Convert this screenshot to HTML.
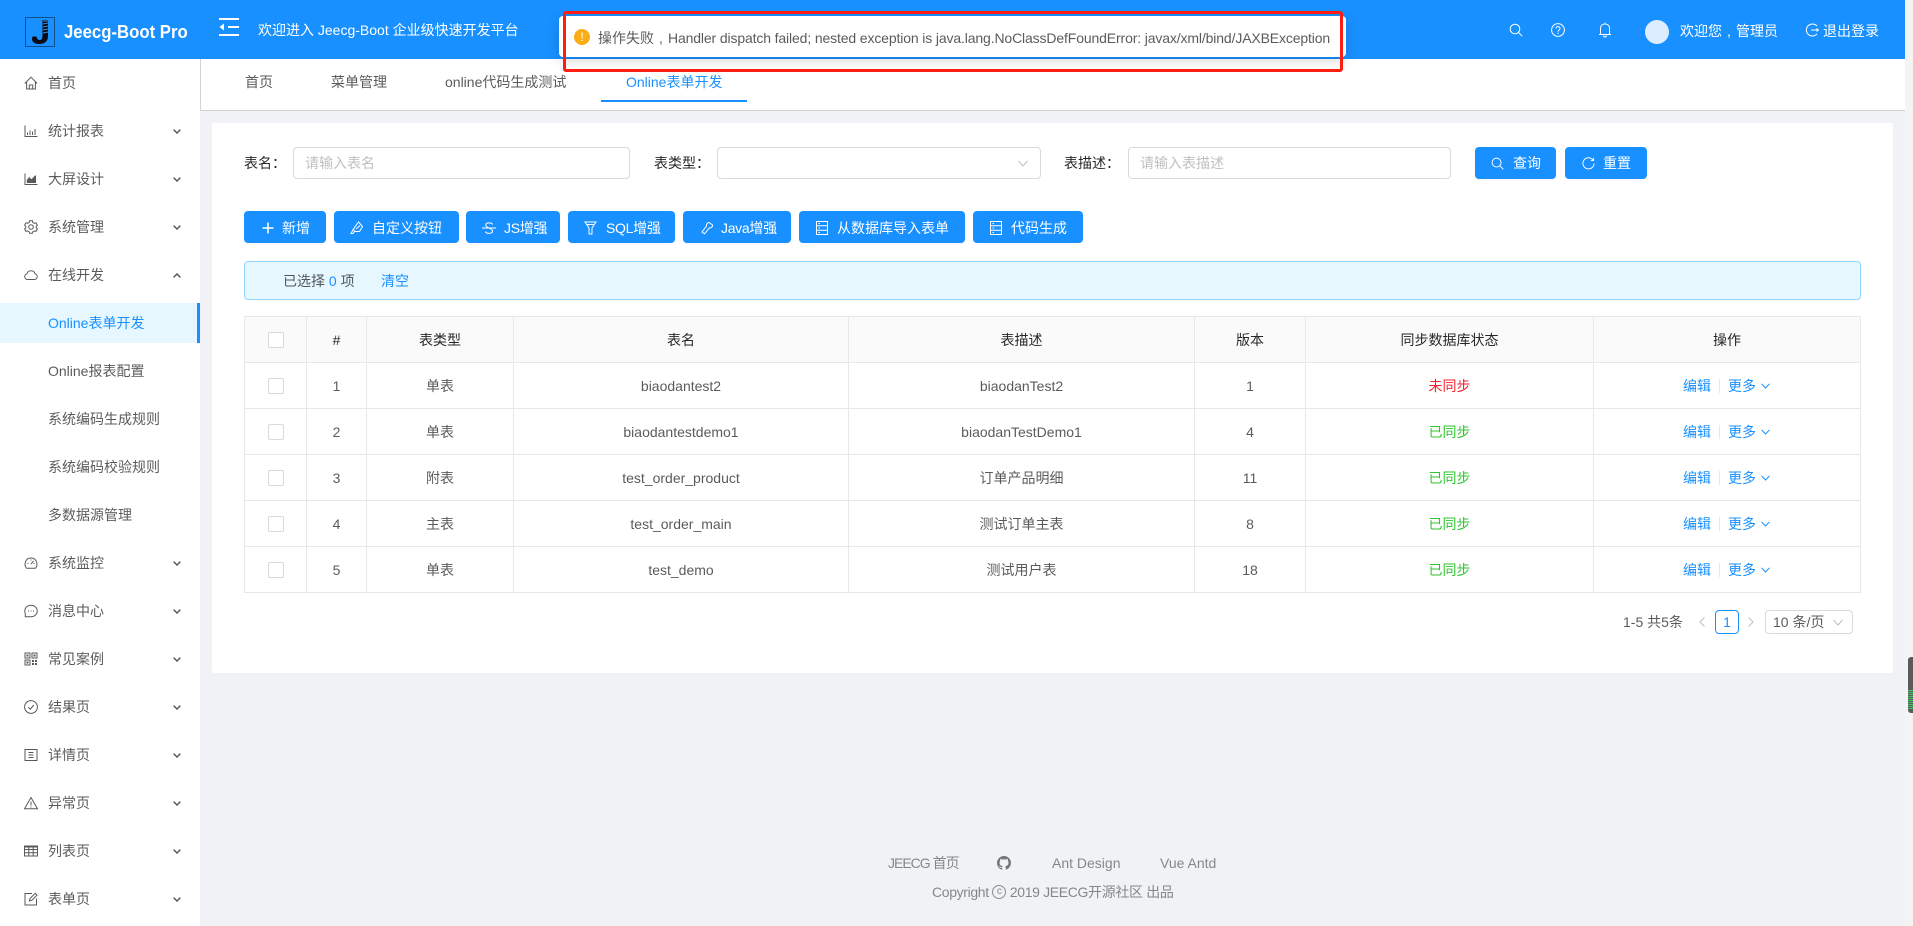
<!DOCTYPE html>
<html lang="zh-CN"><head><meta charset="utf-8"><title>Jeecg-Boot Pro</title>
<style>
*{box-sizing:border-box}
html,body{margin:0;padding:0;width:1913px;height:926px;overflow:hidden;background:#f0f2f5}
body{position:relative;font-family:"Liberation Sans","Noto Sans CJK SC",sans-serif;font-size:14px;color:rgba(0,0,0,.65)}
.a,.t,svg.i{position:absolute}
.t{white-space:nowrap;line-height:22px;height:22px}
.w{color:#fff}.k{color:rgba(0,0,0,.85)}.b{color:#1890ff}
svg.i{fill:none;stroke:#595959;stroke-width:1}
svg.h{stroke:#fff}
.btn{position:absolute;top:211px;height:32px;background:#1890ff;border-radius:4px;box-shadow:0 2px 0 rgba(0,0,0,.015)}
.inp{position:absolute;top:147px;height:32px;background:#fff;border:1px solid #d9d9d9;border-radius:4px}
.cm{display:inline-block;width:14px;text-align:center;letter-spacing:0}
#tbl{position:absolute;left:244px;top:316px;width:1617px;border-collapse:separate;border-spacing:0;table-layout:fixed;border-top:1px solid #e8e8e8;border-left:1px solid #e8e8e8}
#tbl td,#tbl th{height:46px;padding:0;text-align:center;font-weight:400;border-right:1px solid #e8e8e8;border-bottom:1px solid #e8e8e8}
#tbl tr:first-child th{height:46px;background:#fafafa;color:rgba(0,0,0,.85)}
.cb{display:block;width:16px;height:16px;margin:0 auto;border:1px solid #d9d9d9;border-radius:2px;background:#fff}
.ok{color:#2fc52f}.no{color:#f5222d}
.op{position:relative;display:block;height:22px;line-height:22px;color:#1890ff;text-align:left;padding-left:89px}
.op i{position:absolute;left:125px;top:4px;width:1px;height:14px;background:#e8e8e8}
.op b{position:absolute;left:134px;top:0;font-weight:400}
.op svg{position:absolute;left:167px;top:8px;fill:none;stroke:#1890ff;stroke-width:1}
</style></head><body>

<!-- header -->
<div class="a" style="left:0;top:0;width:1905px;height:59px;background:#1890ff"></div>
<div class="a" style="left:1905px;top:0;width:8px;height:926px;background:#f4f4f5"></div>
<svg class="a" style="left:25px;top:17px" width="30" height="30" viewBox="0 0 30 30"><rect x=".5" y=".5" width="29" height="29" fill="none" stroke="#0f4f8a"/><path d="M17.500 3H23V19C23 25 19 27 14 27C10 27 7 25 7 22L7.500 19.500H11.500C12 22 13 23 15 23C17 23 17.500 21 17.500 18Z" fill="#0a0a14"/><path d="M18 4L23 4M18 7L23 6M18 10L23 9M18 13L23 12M18 16L23 15" stroke="#3f8fd8" stroke-width="1"/></svg>
<div class="t w" style="left:64px;top:21px;font-size:18px;font-weight:700;transform:scaleX(.93);transform-origin:left center">Jeecg-Boot Pro</div>
<svg class="a" style="left:219px;top:18px" width="20" height="18" viewBox="0 0 20 18"><path d="M0 1H20M9 9H20M0 17H20" stroke="#fff" stroke-width="2"/><path d="M5 5.500V12.500L0.500 9Z" fill="#fff"/></svg>
<div class="t w" style="left:258px;top:19px">欢迎进入 Jeecg-Boot 企业级快速开发平台</div>

<svg class="i h" style="left:1509px;top:23px" width="14" height="14" viewBox="0 0 14 14"><circle cx="6" cy="6" r="4.800"/><path d="M9.500 9.500L13.200 13.200"/></svg>
<svg class="i h" style="left:1551px;top:23px" width="14" height="14" viewBox="0 0 14 14"><circle cx="7" cy="7" r="6.400"/><path d="M5 5.500C5 3 9 3 9 5.500C9 7 7 7 7 8.700"/><path d="M7 9.800V11"/></svg>
<svg class="i h" style="left:1598px;top:22px" width="14" height="16" viewBox="0 0 14 16"><path d="M1 12.500H13M2.500 12.500V6.500C2.500 3.500 4.500 2 7 2C9.500 2 11.500 3.500 11.500 6.500V12.500M7 .5V2M5.500 13.500C5.800 15.500 8.200 15.500 8.500 13.500"/></svg>
<div class="a" style="left:1645px;top:20px;width:24px;height:24px;border-radius:50%;background:#dcedff"></div>
<div class="t w" style="left:1680px;top:20px">欢迎您<span class="cm">,</span>管理员</div>
<svg class="i h" style="left:1805px;top:23px" width="14" height="14" viewBox="0 0 14 14"><path d="M12 3.200A6 6 0 1 0 12 10.800"/><path d="M6 7H13.500M11.500 5.500L13.500 7L11.500 8.500"/></svg>
<div class="t w" style="left:1823px;top:20px">退出登录</div>

<!-- sidebar -->
<div class="a" style="left:0;top:59px;width:200px;height:867px;background:#fff"></div>
<div class="a" style="left:0;top:303px;width:200px;height:40px;background:#e6f7ff;border-right:3px solid #1890ff"></div>

<svg class="i" style="left:24px;top:76px" width="14" height="14" viewBox="0 0 14 14"><path d="M.8 7.500L7 1.200L13.200 7.500M2.600 5.800V13H11.400V5.800M5.300 13V9H8.700V13"/></svg>
<div class="t" style="left:48px;top:72px">首页</div>

<svg class="i" style="left:24px;top:124px" width="14" height="14" viewBox="0 0 14 14"><path d="M1 1.500V12.500H13.500M3.500 11V8.500M6 11V6.500M8.500 11V7.500M11 11V5" /></svg>
<div class="t" style="left:48px;top:120px">统计报表</div>

<svg class="i" style="left:24px;top:172px" width="14" height="14" viewBox="0 0 14 14"><path d="M1 1.500V12.500H13.500"/><path d="M2.800 11V8L5.200 5L7.500 7.200L11 3.500L12 3.500V11Z" fill="#595959" stroke="none"/></svg>
<div class="t" style="left:48px;top:168px">大屏设计</div>

<svg class="i" style="left:24px;top:220px" width="14" height="14" viewBox="0 0 14 14"><circle cx="7" cy="7" r="2.300"/><path d="M5.600 .8H8.400L8.900 2.500L10.400 3.300L12 2.800L13.400 5.200L12.200 6.400V7.800L13.400 9L12 11.400L10.400 10.900L8.900 11.700L8.400 13.300H5.600L5.100 11.700L3.600 10.900L2 11.400L.6 9L1.800 7.800V6.400L.6 5.200L2 2.800L3.600 3.300L5.100 2.500Z"/></svg>
<div class="t" style="left:48px;top:216px">系统管理</div>

<svg class="i" style="left:24px;top:268px" width="14" height="14" viewBox="0 0 14 14"><path d="M3.800 11.500H10.400A2.900 2.900 0 0 0 11.100 5.800A4.300 4.300 0 0 0 2.900 5.800A2.900 2.900 0 0 0 3.800 11.500Z"/></svg>
<div class="t" style="left:48px;top:264px">在线开发</div>

<div class="t b" style="left:48px;top:312px">Online表单开发</div>
<div class="t" style="left:48px;top:360px">Online报表配置</div>
<div class="t" style="left:48px;top:408px">系统编码生成规则</div>
<div class="t" style="left:48px;top:456px">系统编码校验规则</div>
<div class="t" style="left:48px;top:504px">多数据源管理</div>

<svg class="i" style="left:24px;top:556px" width="14" height="14" viewBox="0 0 14 14"><path d="M2.500 12.300H11.500C14 9.500 13.500 2 7 2C.5 2 0 9.500 2.500 12.300Z"/><path d="M7 8L9.500 5M3.500 7.500H4.500M9.500 7.500H10.500M7 3.500V4.500"/></svg>
<div class="t" style="left:48px;top:552px">系统监控</div>

<svg class="i" style="left:24px;top:604px" width="14" height="14" viewBox="0 0 14 14"><path d="M7 1.200C3.500 1.200 .8 3.700 .8 7C.8 8.500 1.300 9.600 1.300 10V12.700H7C10.500 12.700 13.200 10.300 13.200 7C13.200 3.700 10.500 1.200 7 1.200Z"/><path d="M4 7H5M6.500 7H7.500M9 7H10"/></svg>
<div class="t" style="left:48px;top:600px">消息中心</div>

<svg class="i" style="left:24px;top:652px" width="14" height="14" viewBox="0 0 14 14"><path d="M1 1H6V6H1ZM8 1H13V6H8ZM1 8H6V13H1Z" /><path d="M2.500 2.500H4.500V4.500H2.500ZM9.500 2.500H11.500V4.500H9.500ZM2.500 9.500H4.500V11.500H2.500ZM8 8H10V10H8ZM11 11H13V13H11ZM8 11H10V13H8ZM11 8H13V10H11Z" fill="#595959" stroke="none"/></svg>
<div class="t" style="left:48px;top:648px">常见案例</div>

<svg class="i" style="left:24px;top:700px" width="14" height="14" viewBox="0 0 14 14"><circle cx="7" cy="7" r="6.400"/><path d="M4.300 7.200L6.300 9.200L9.800 5"/></svg>
<div class="t" style="left:48px;top:696px">结果页</div>

<svg class="i" style="left:24px;top:748px" width="14" height="14" viewBox="0 0 14 14"><path d="M1 1.500H13V12.500H1Z"/><path d="M4.500 4.500H9.500M4.500 7H9.500M4.500 9.500H9.500"/></svg>
<div class="t" style="left:48px;top:744px">详情页</div>

<svg class="i" style="left:24px;top:796px" width="14" height="14" viewBox="0 0 14 14"><path d="M7 1.500L13.500 12.800H.5Z"/><path d="M7 5.500V9.500M7 10.500V11.500"/></svg>
<div class="t" style="left:48px;top:792px">异常页</div>

<svg class="i" style="left:24px;top:844px" width="14" height="14" viewBox="0 0 14 14"><path d="M.5 2H13.500V12H.5Z" stroke-width="1"/><path d="M.5 2.500H13.500" stroke-width="2"/><path d="M.5 5.500H13.500M.5 8.700H13.500M4.800 2V12M9.200 2V12"/></svg>
<div class="t" style="left:48px;top:840px">列表页</div>

<svg class="i" style="left:24px;top:892px" width="14" height="14" viewBox="0 0 14 14"><path d="M8 1.500H1V13H12.500V6.500"/><path d="M5.500 9L6 6.500L11.200 1.300L13 3.100L7.800 8.300Z"/></svg>
<div class="t" style="left:48px;top:888px">表单页</div>

<!-- sidebar chevrons -->
<svg class="i" style="left:173px;top:129px" width="8" height="5" viewBox="0 0 8 5"><path d="M.6 .6L4 4L7.400 .6" stroke-width="1.500"/></svg>
<svg class="i" style="left:173px;top:177px" width="8" height="5" viewBox="0 0 8 5"><path d="M.6 .6L4 4L7.400 .6" stroke-width="1.500"/></svg>
<svg class="i" style="left:173px;top:225px" width="8" height="5" viewBox="0 0 8 5"><path d="M.6 .6L4 4L7.400 .6" stroke-width="1.500"/></svg>
<svg class="i" style="left:173px;top:273px" width="8" height="5" viewBox="0 0 8 5"><path d="M.6 4.400L4 1L7.400 4.400" stroke-width="1.500"/></svg>
<svg class="i" style="left:173px;top:561px" width="8" height="5" viewBox="0 0 8 5"><path d="M.6 .6L4 4L7.400 .6" stroke-width="1.500"/></svg>
<svg class="i" style="left:173px;top:609px" width="8" height="5" viewBox="0 0 8 5"><path d="M.6 .6L4 4L7.400 .6" stroke-width="1.500"/></svg>
<svg class="i" style="left:173px;top:657px" width="8" height="5" viewBox="0 0 8 5"><path d="M.6 .6L4 4L7.400 .6" stroke-width="1.500"/></svg>
<svg class="i" style="left:173px;top:705px" width="8" height="5" viewBox="0 0 8 5"><path d="M.6 .6L4 4L7.400 .6" stroke-width="1.500"/></svg>
<svg class="i" style="left:173px;top:753px" width="8" height="5" viewBox="0 0 8 5"><path d="M.6 .6L4 4L7.400 .6" stroke-width="1.500"/></svg>
<svg class="i" style="left:173px;top:801px" width="8" height="5" viewBox="0 0 8 5"><path d="M.6 .6L4 4L7.400 .6" stroke-width="1.500"/></svg>
<svg class="i" style="left:173px;top:849px" width="8" height="5" viewBox="0 0 8 5"><path d="M.6 .6L4 4L7.400 .6" stroke-width="1.500"/></svg>
<svg class="i" style="left:173px;top:897px" width="8" height="5" viewBox="0 0 8 5"><path d="M.6 .6L4 4L7.400 .6" stroke-width="1.500"/></svg>

<!-- tabs -->
<div class="a" style="left:200px;top:59px;width:1705px;height:52px;background:#fff;border-left:1px solid #d4d4d4;border-bottom:1px solid #d0d0d0"></div>
<div class="t" style="left:245px;top:71px">首页</div>
<div class="t" style="left:331px;top:71px">菜单管理</div>
<div class="t" style="left:445px;top:71px">online代码生成测试</div>
<div class="t b" style="left:626px;top:71px">Online表单开发</div>
<div class="a" style="left:601px;top:100px;width:146px;height:2px;background:#1890ff"></div>

<!-- card -->
<div class="a" style="left:212px;top:123px;width:1681px;height:550px;background:#fff;border-radius:2px"></div>

<!-- form -->
<div class="t k" style="left:244px;top:152px">表名：</div>
<div class="inp" style="left:293px;width:337px"></div>
<div class="t" style="left:305px;top:152px;color:#bfbfbf">请输入表名</div>
<div class="t k" style="left:654px;top:152px">表类型：</div>
<div class="inp" style="left:717px;width:324px"></div>
<svg class="i" style="left:1018px;top:160px" width="10" height="7" viewBox="0 0 10 7"><path d="M.5 1L5 6L9.500 1" stroke="#bfbfbf"/></svg>
<div class="t k" style="left:1064px;top:152px">表描述：</div>
<div class="inp" style="left:1128px;width:323px"></div>
<div class="t" style="left:1140px;top:152px;color:#bfbfbf">请输入表描述</div>

<div class="btn" style="left:1475px;top:147px;width:81px"></div>
<svg class="i h" style="left:1491px;top:157px" width="13" height="13" viewBox="0 0 14 14"><circle cx="6" cy="6" r="4.800"/><path d="M9.500 9.500L13.200 13.200"/></svg>
<div class="t w" style="left:1513px;top:152px">查询</div>
<div class="btn" style="left:1565px;top:147px;width:82px"></div>
<svg class="i h" style="left:1582px;top:157px" width="13" height="13" viewBox="0 0 14 14"><path d="M12 3.500A6 6 0 1 0 13 7"/><path d="M9.500 3.800H12.500V.8"/></svg>
<div class="t w" style="left:1603px;top:152px">重置</div>

<!-- toolbar -->
<div class="btn" style="left:244px;width:82px"></div>
<svg class="i" style="left:262px;top:222px" width="12" height="12" viewBox="0 0 12 12"><path d="M6 .5V11.500M.5 6H11.500" stroke="#fff" stroke-width="1.500"/></svg>
<div class="t w" style="left:282px;top:217px">新增</div>
<div class="btn" style="left:334px;width:125px"></div>
<svg class="i h" style="left:350px;top:221px" width="14" height="14" viewBox="0 0 14 14"><path d="M8.500 1L12.500 5.500L9.500 10.500H4.500L3.500 8Z"/><path d="M4.500 10.500L3 12.500H1L3.500 8M6 8L10 4.500"/></svg>
<div class="t w" style="left:372px;top:217px">自定义按钮</div>
<div class="btn" style="left:466px;width:94px"></div>
<svg class="i h" style="left:482px;top:221px" width="14" height="14" viewBox="0 0 14 14"><path d="M0 7H14M10.500 3.500C10 1.500 4 1 3.800 4C3.700 5.500 5 6.300 7 7C9 7.700 10.500 8.500 10.500 10.300C10.500 13 4 13 3.500 10.500" /></svg>
<div class="t w" style="left:504px;top:217px;letter-spacing:-.3px">JS增强</div>
<div class="btn" style="left:568px;width:107px"></div>
<svg class="i h" style="left:584px;top:221px" width="13" height="14" viewBox="0 0 13 14"><path d="M1 1H12L8 7V13H5V7ZM2.500 3.500H10.500"/></svg>
<div class="t w" style="left:606px;top:217px;letter-spacing:-.3px">SQL增强</div>
<div class="btn" style="left:683px;width:108px"></div>
<svg class="i h" style="left:700px;top:221px" width="14" height="14" viewBox="0 0 14 14"><path d="M9 1.500L12.500 4C12.800 6 10.800 7.200 9.500 6.800L4.500 12.800L2 11L6.500 5C6 3.300 7.500 1.500 9 1.500Z"/></svg>
<div class="t w" style="left:721px;top:217px;letter-spacing:-.3px">Java增强</div>
<div class="btn" style="left:799px;width:166px"></div>
<svg class="i h" style="left:816px;top:221px" width="12" height="14" viewBox="0 0 12 14"><path d="M.5 .5H11.500V13.500H.5ZM.5 4.800H11.500M.5 9.200H11.500"/><path d="M2.500 2.500H4M2.500 7H4M2.500 11.500H4"/></svg>
<div class="t w" style="left:837px;top:217px">从数据库导入表单</div>
<div class="btn" style="left:973px;width:110px"></div>
<svg class="i h" style="left:990px;top:221px" width="12" height="14" viewBox="0 0 12 14"><path d="M.5 .5H11.500V13.500H.5ZM.5 4.800H11.500M.5 9.200H11.500"/><path d="M2.500 2.500H4M2.500 7H4M2.500 11.500H4"/></svg>
<div class="t w" style="left:1011px;top:217px">代码生成</div>

<!-- alert -->
<div class="a" style="left:244px;top:261px;width:1617px;height:39px;background:#e6f7ff;border:1px solid #91d5ff;border-radius:4px"></div>
<div class="t" style="left:283px;top:270px">已选择 <span class="b">0</span> 项</div>
<div class="t b" style="left:381px;top:270px">清空</div>

<!-- table -->
<table id="tbl">
<colgroup><col style="width:62px"><col style="width:60px"><col style="width:147px"><col style="width:335px"><col style="width:346px"><col style="width:111px"><col style="width:288px"><col style="width:267px"></colgroup>
<tr><th><span class="cb"></span></th><th>#</th><th>表类型</th><th>表名</th><th>表描述</th><th>版本</th><th>同步数据库状态</th><th>操作</th></tr>
<tr><td><span class="cb"></span></td><td>1</td><td>单表</td><td>biaodantest2</td><td>biaodanTest2</td><td>1</td><td class="no">未同步</td><td><span class="op">编辑<i></i><b>更多</b><svg width="9" height="6" viewBox="0 0 9 6"><path d="M.5 .8L4.500 5L8.500 .8"/></svg></span></td></tr>
<tr><td><span class="cb"></span></td><td>2</td><td>单表</td><td>biaodantestdemo1</td><td>biaodanTestDemo1</td><td>4</td><td class="ok">已同步</td><td><span class="op">编辑<i></i><b>更多</b><svg width="9" height="6" viewBox="0 0 9 6"><path d="M.5 .8L4.500 5L8.500 .8"/></svg></span></td></tr>
<tr><td><span class="cb"></span></td><td>3</td><td>附表</td><td>test_order_product</td><td>订单产品明细</td><td>11</td><td class="ok">已同步</td><td><span class="op">编辑<i></i><b>更多</b><svg width="9" height="6" viewBox="0 0 9 6"><path d="M.5 .8L4.500 5L8.500 .8"/></svg></span></td></tr>
<tr><td><span class="cb"></span></td><td>4</td><td>主表</td><td>test_order_main</td><td>测试订单主表</td><td>8</td><td class="ok">已同步</td><td><span class="op">编辑<i></i><b>更多</b><svg width="9" height="6" viewBox="0 0 9 6"><path d="M.5 .8L4.500 5L8.500 .8"/></svg></span></td></tr>
<tr><td><span class="cb"></span></td><td>5</td><td>单表</td><td>test_demo</td><td>测试用户表</td><td>18</td><td class="ok">已同步</td><td><span class="op">编辑<i></i><b>更多</b><svg width="9" height="6" viewBox="0 0 9 6"><path d="M.5 .8L4.500 5L8.500 .8"/></svg></span></td></tr>
</table>

<!-- pagination -->
<div class="t" style="left:1623px;top:611px">1-5 共5条</div>
<svg class="i" style="left:1699px;top:617px" width="6" height="10" viewBox="0 0 6 10"><path d="M5.500 .5L1 5L5.500 9.500" stroke="#bfbfbf"/></svg>
<div class="a" style="left:1715px;top:610px;width:24px;height:24px;border:1px solid #1890ff;border-radius:4px;color:#1890ff;text-align:center;line-height:22px">1</div>
<svg class="i" style="left:1748px;top:617px" width="6" height="10" viewBox="0 0 6 10"><path d="M.5 .5L5 5L.5 9.500" stroke="#bfbfbf"/></svg>
<div class="a" style="left:1765px;top:610px;width:88px;height:24px;border:1px solid #d9d9d9;border-radius:4px"></div>
<div class="t" style="left:1773px;top:611px">10 条/页</div>
<svg class="i" style="left:1833px;top:619px" width="10" height="7" viewBox="0 0 10 7"><path d="M.5 1L5 6L9.500 1" stroke="#bfbfbf"/></svg>

<!-- footer -->
<div class="t" style="left:888px;top:852px;color:rgba(0,0,0,.45);letter-spacing:-1px">JEECG 首页</div>
<svg class="a" style="left:997px;top:856px" width="14" height="14" viewBox="0 0 16 16"><path fill="#777" d="M8 0C3.580 0 0 3.580 0 8c0 3.540 2.290 6.530 5.470 7.590.4.070.55-.17.55-.38 0-.19-.01-.82-.01-1.490-2.010.37-2.530-.49-2.690-.94-.09-.23-.48-.94-.82-1.130-.28-.15-.68-.52-.01-.53.63-.01 1.080.58 1.230.82.720 1.210 1.870.87 2.330.66.070-.52.28-.87.510-1.070-1.780-.2-3.640-.89-3.640-3.950 0-.87.31-1.590.82-2.150-.08-.2-.36-1.020.08-2.120 0 0 .67-.21 2.200.82.640-.18 1.320-.27 2-.27s1.360.09 2 .27c1.530-1.040 2.200-.82 2.200-.82.440 1.100.16 1.920.08 2.120.51.560.82 1.270.82 2.150 0 3.070-1.870 3.750-3.650 3.950.29.250.54.730.54 1.480 0 1.070-.01 1.930-.01 2.200 0 .21.150.46.550.38A8.010 8.010 0 0 0 16 8c0-4.420-3.580-8-8-8z"/></svg>
<div class="t" style="left:1052px;top:852px;color:rgba(0,0,0,.45)">Ant Design</div>
<div class="t" style="left:1160px;top:852px;color:rgba(0,0,0,.45)">Vue Antd</div>
<div class="t" style="left:932px;top:881px;color:rgba(0,0,0,.45);letter-spacing:-.35px">Copyright <span style="display:inline-block;width:14px;height:14px;border:1px solid #8c8c8c;border-radius:50%;line-height:12px;text-align:center;font-size:10px;vertical-align:top;margin-top:4px;letter-spacing:0">c</span> 2019 JEECG开源社区 出品</div>

<!-- scrollbar thumb -->
<div class="a" style="left:1908px;top:657px;width:5px;height:56px;background:#5a5a5a;border-radius:3px 0 0 3px;overflow:hidden"><div style="margin-top:33px;height:20px;background:repeating-linear-gradient(#45c265 0 1px,#5a5a5a 1px 2px)"></div></div>

<!-- message -->
<div class="a" style="left:559px;top:16px;width:787px;height:41px;background:#fff;border-radius:4px;box-shadow:0 4px 12px rgba(0,0,0,.15)"></div>
<div class="a" style="left:574px;top:29px;width:16px;height:16px;border-radius:50%;background:#faad14;color:#fff;font-size:12px;line-height:16px;text-align:center">!</div>
<div class="t" style="left:598px;top:27px">操作失败<span class="cm">,</span><span style="letter-spacing:-.135px">Handler dispatch failed; nested exception is java.lang.NoClassDefFoundError: javax/xml/bind/JAXBException</span></div>

<!-- red annotation -->
<div class="a" style="left:563px;top:11px;width:780px;height:61px;border:3px solid #ff1c10;border-radius:3px"></div>
</body></html>
